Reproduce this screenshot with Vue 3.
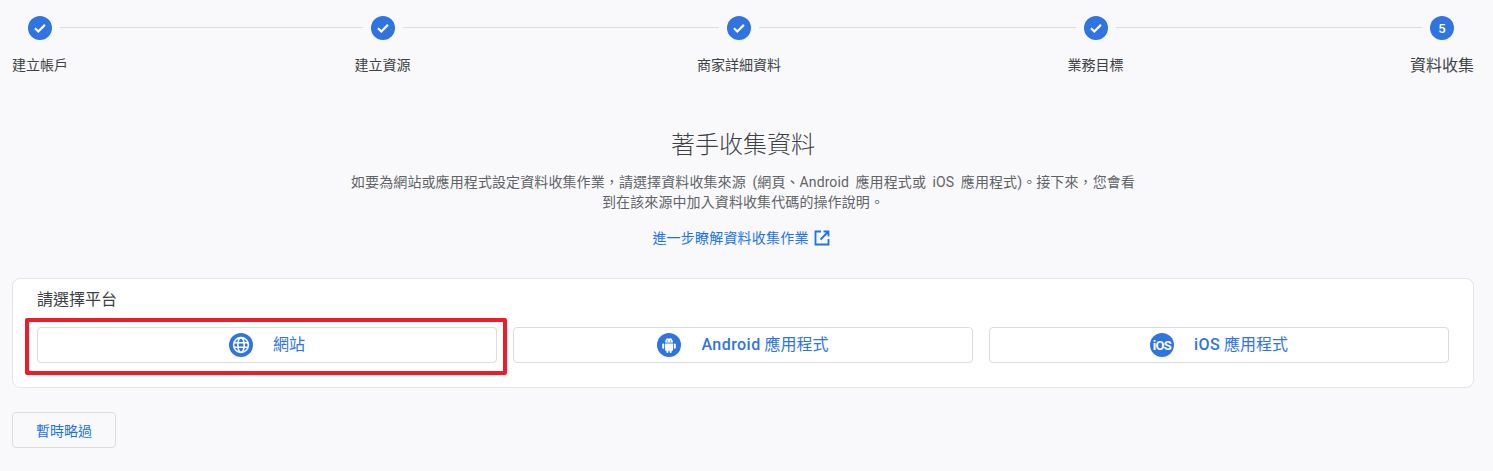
<template>
  <div class="page">
    <div class="stepper">
      <template v-for="(step, index) in steps" :key="step.label">
        <div class="step" :class="{ current: index === steps.length - 1 }">
          <div class="dot">
            <svg v-if="index < steps.length - 1" width="16" height="16" viewBox="0 0 16 16">
              <path d="M3 8.3l3.3 3.2 6.6-6.6" fill="none" stroke="#fff" stroke-width="2.2" />
            </svg>
            <span v-else>{{ index + 1 }}</span>
          </div>
          <div class="step-label">{{ step.label }}</div>
        </div>
        <div v-if="index < steps.length - 1" class="connector" :style="connectorStyle(index)"></div>
      </template>
    </div>

    <div class="intro">
      <h2 class="title">著手收集資料</h2>
      <p class="desc">如要為網站或應用程式設定資料收集作業，請選擇資料收集來源 (網頁、Android 應用程式或 iOS 應用程式)。接下來，您會看到在該來源中加入資料收集代碼的操作說明。</p>
      <a class="learn" href="#">
        進一步瞭解資料收集作業
        <svg width="16" height="16" viewBox="0 0 16 16">
          <path d="M7 1.5H1.5v13h13V9M9.5 1.5h5v5M14.5 1.5L6.5 9.5" fill="none" stroke="#1a73e8" stroke-width="1.8" />
        </svg>
      </a>
    </div>

    <section class="card">
      <div class="card-title">請選擇平台</div>
      <div class="platforms">
        <button class="platform">
          <svg class="icon" width="24" height="24" viewBox="0 0 24 24">
            <circle cx="12" cy="12" r="12" fill="#2f74e0" />
            <g fill="none" stroke="#fff" stroke-width="1.6">
              <circle cx="12" cy="12" r="7.4" />
              <ellipse cx="12" cy="12" rx="3.2" ry="7.4" />
              <path d="M5 9.7h14M5 14.3h14" />
            </g>
          </svg>
          <span class="platform-name">網站</span>
          <i class="highlight"></i>
        </button>
        <button class="platform">
          <svg class="icon" width="24" height="24" viewBox="0 0 24 24">
            <circle cx="12" cy="12" r="12" fill="#2f74e0" />
            <g fill="#fff">
              <path d="M8 9.6a4 4 0 0 1 8 0z" />
              <path d="M8 10.4h8v6.4a1 1 0 0 1-1 1H9a1 1 0 0 1-1-1z" />
              <rect x="5.2" y="10.4" width="2" height="5.4" rx="1" />
              <rect x="16.8" y="10.4" width="2" height="5.4" rx="1" />
              <rect x="9.4" y="16" width="2" height="4" rx="1" />
              <rect x="12.6" y="16" width="2" height="4" rx="1" />
            </g>
            <path d="M9.6 5l1 1.5M14.4 5l-1 1.5" stroke="#fff" stroke-width=".7" />
            <circle cx="10.4" cy="7.9" r=".55" fill="#2f74e0" />
            <circle cx="13.6" cy="7.9" r=".55" fill="#2f74e0" />
          </svg>
          <span class="platform-name"><span class="latin">Android</span> 應用程式</span>
        </button>
        <button class="platform">
          <div class="ios-icon">iOS</div>
          <span class="platform-name"><span class="latin">iOS</span> 應用程式</span>
        </button>
      </div>
    </section>

    <button class="skip">暫時略過</button>
  </div>
</template>

<script setup>
const steps = [
  { label: '建立帳戶', width: 56 },
  { label: '建立資源', width: 56 },
  { label: '商家詳細資料', width: 84 },
  { label: '業務目標', width: 56 },
  { label: '資料收集', width: 64 }
]

// the line runs from circle to circle, so it reaches back over the label's overhang
function connectorStyle(index) {
  const left = (steps[index].width - 24) / 2 - 8
  const right = (steps[index + 1].width - 24) / 2 - 8
  return { '--left': `${-left}px`, '--right': `${-right}px` }
}
</script>

<style scoped>
.page {
  padding: 16px 19px 0 12px;
  font-family: Roboto, "Noto Sans CJK TC", sans-serif;
  color: #3c4043;
}

.stepper {
  display: flex;
  align-items: flex-start;
}

.step {
  display: flex;
  flex-direction: column;
  align-items: center;
  gap: 15px;
}

.dot {
  width: 24px;
  height: 24px;
  border-radius: 50%;
  background: #2f74e0;
  color: #fff;
  font-size: 13px;
  font-weight: 500;
  display: flex;
  align-items: center;
  justify-content: center;
}

.step-label {
  font-size: 14px;
  line-height: 20px;
  color: #3c4043;
  white-space: nowrap;
}

.step.current .step-label {
  font-size: 16px;
  line-height: 22px;
  color: #3c4043;
}

.connector {
  flex: 1;
  position: relative;
  height: 24px;
}

.connector::before {
  content: '';
  position: absolute;
  top: 11px;
  left: var(--left);
  right: var(--right);
  height: 1px;
  background: #dadce0;
}

.intro {
  margin-top: 52px;
  display: flex;
  flex-direction: column;
  align-items: center;
}

.title {
  margin: 0;
  font-size: 24px;
  line-height: 32px;
  font-weight: 300;
  color: #3c4043;
}

.desc {
  margin: 11px 0 0;
  width: 790px;
  font-size: 14px;
  line-height: 20px;
  letter-spacing: 0.1px;
  word-spacing: 3px;
  text-align: center;
  color: #5f6368;
}

.learn {
  margin: 16px 4px 0 0;
  display: flex;
  align-items: center;
  gap: 5px;
  font-size: 14px;
  line-height: 20px;
  letter-spacing: 0.2px;
  color: #1a73e8;
  text-decoration: none;
}

.card {
  margin-top: 30px;
  height: 110px;
  box-sizing: border-box;
  padding: 9px 24px 0;
  background: #fff;
  border: 1px solid #e3e4e8;
  border-radius: 8px;
}

.card-title {
  font-size: 16px;
  line-height: 24px;
  color: #3c4043;
}

.platforms {
  margin-top: 15px;
  display: flex;
  gap: 16px;
}

.platform {
  position: relative;
  flex: 0 0 460px;
  height: 36px;
  display: flex;
  align-items: center;
  justify-content: center;
  gap: 20px;
  background: #fff;
  border: 1px solid #dadce0;
  border-radius: 4px;
  font-family: inherit;
  font-size: 16px;
  color: #2f74e0;
  padding: 0;
}

.platform-name {
  padding-bottom: 4px;
}

.latin {
  font-weight: 500;
  letter-spacing: 0.45px;
}

.ios-icon {
  width: 24px;
  height: 24px;
  border-radius: 50%;
  background: #2f74e0;
  color: #fff;
  font-size: 13px;
  font-weight: 700;
  letter-spacing: -0.6px;
  display: flex;
  align-items: center;
  justify-content: center;
}

.highlight {
  position: absolute;
  top: -10px;
  left: -13px;
  right: -11px;
  bottom: -13px;
  border: 4px solid #ed1c2b;
  border-radius: 2px;
  pointer-events: none;
}

.skip {
  margin-top: 24px;
  display: block;
  width: 104px;
  height: 36px;
  background: transparent;
  border: 1px solid #dadce0;
  border-radius: 4px;
  font-family: inherit;
  font-size: 14px;
  color: #1a73e8;
  padding: 0;
}
</style>

<style>
html, body {
  background: #f9f9fb;
}
</style>
